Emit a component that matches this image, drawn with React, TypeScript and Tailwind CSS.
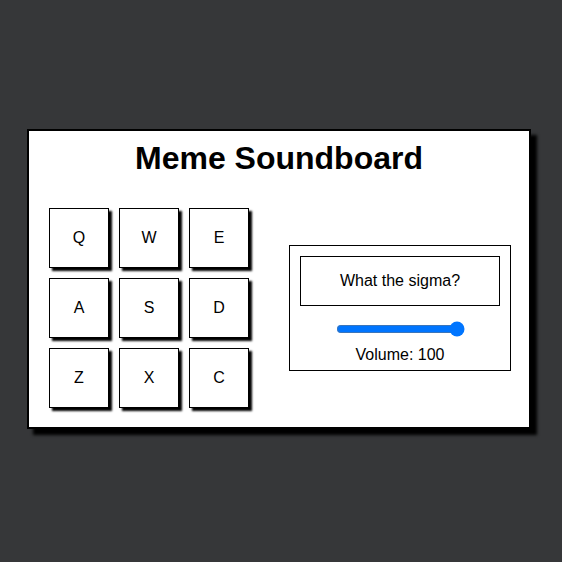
import React, { useState } from "react";

const keys = ["Q", "W", "E", "A", "S", "D", "Z", "X", "C"];

const App: React.FC = () => {
  const [volume, setVolume] = useState(100);

  return (
    <div
      className="flex min-h-screen items-center justify-center bg-[#363739] pr-[4px] pb-[4px]"
      style={{ fontFamily: '"Liberation Sans", Arial, sans-serif' }}
    >
      <div className="h-[300px] w-[504px] border-2 border-black bg-white text-black shadow-[6px_6px_3px_#000]">
        <h1 className="mt-[9px] text-center text-[32px] font-bold leading-[37px]">
          Meme Soundboard
        </h1>
        <div className="mt-[31px] flex items-center pl-[20px]">
          <div className="grid grid-cols-[60px_60px_60px] gap-[10px]">
            {keys.map((k) => (
              <button
                key={k}
                className="flex h-[60px] w-[60px] items-center justify-center border border-black bg-white text-[16px] shadow-[3px_3px_2px_#000]"
              >
                {k}
              </button>
            ))}
          </div>
          <div className="ml-[40px] flex h-[126px] w-[222px] flex-col items-center border border-black p-[10px] pb-[6px]">
            <div className="flex h-[50px] w-[200px] shrink-0 items-center justify-center border border-black text-[16px]">
              What the sigma?
            </div>
            <input
              type="range"
              min={0}
              max={100}
              value={volume}
              onChange={(e) => setVolume(Number(e.target.value))}
              className="mt-[15px] h-[16px] w-[129px] accent-[#0075ff]"
            />
            <p className="mt-[9px] text-[16px] leading-[18px]">Volume: {volume}</p>
          </div>
        </div>
      </div>
    </div>
  );
};

export default App;
